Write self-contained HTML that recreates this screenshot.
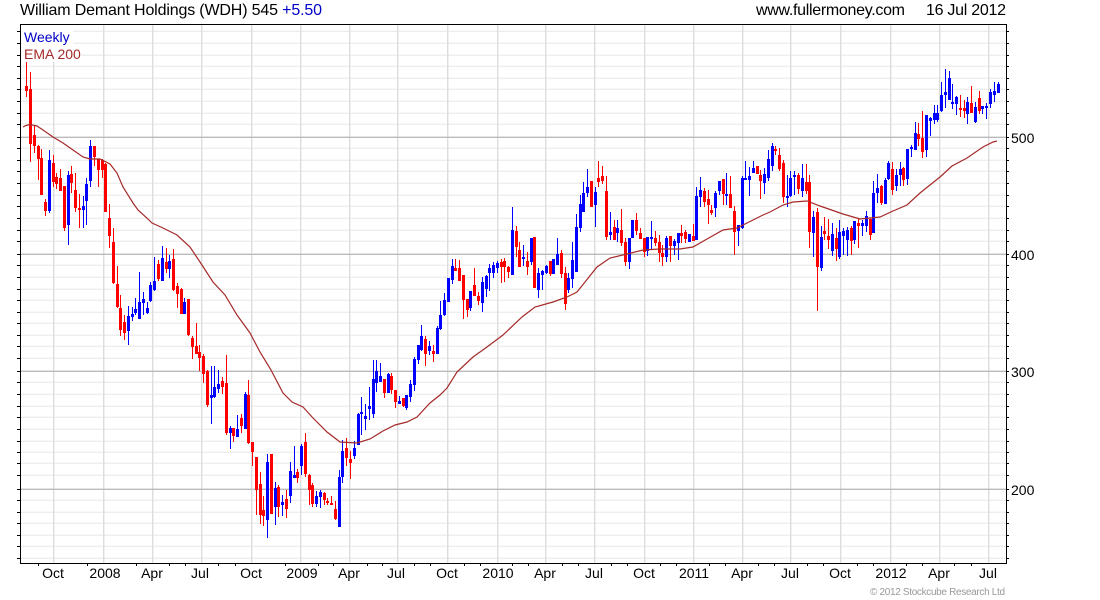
<!DOCTYPE html>
<html><head><meta charset="utf-8"><title>William Demant Holdings</title>
<style>
html,body{margin:0;padding:0;background:#fff;width:1100px;height:600px;overflow:hidden}
svg{display:block}
text{font-family:"Liberation Sans",sans-serif;font-size:14px;fill:#000}
.t{font-size:16px}
.m{text-anchor:middle}
path{fill:none;shape-rendering:crispEdges}
.g{shape-rendering:auto;stroke-width:1.4px}
.r{stroke:#f00;stroke-width:1}.R{stroke:#f00;stroke-width:3}
.b{stroke:#00f;stroke-width:1}.B{stroke:#00f;stroke-width:3}
</style></head><body>
<svg width="1100" height="600" viewBox="0 0 1100 600" xmlns="http://www.w3.org/2000/svg">
<path class="g" stroke="#eee" transform="translate(0,-.2)" d="M20 31.5H1006M20 43.5H1006M20 55.5H1006M20 66.5H1006M20 78.5H1006M20 89.5H1006M20 101.5H1006M20 113.5H1006M20 124.5H1006M20 148.5H1006M20 160.5H1006M20 171.5H1006M20 183.5H1006M20 195.5H1006M20 206.5H1006M20 218.5H1006M20 230.5H1006M20 241.5H1006M20 265.5H1006M20 277.5H1006M20 289.5H1006M20 300.5H1006M20 312.5H1006M20 323.5H1006M20 335.5H1006M20 346.5H1006M20 358.5H1006M20 382.5H1006M20 394.5H1006M20 406.5H1006M20 417.5H1006M20 429.5H1006M20 441.5H1006M20 452.5H1006M20 463.5H1006M20 475.5H1006M20 500.5H1006M20 512.5H1006M20 523.5H1006M20 535.5H1006M20 546.5H1006M20 558.5H1006"/>
<path class="g" stroke="#ddd" transform="translate(.2,0)" d="M53.5 24V563M103.5 24V563M152.5 24V563M201.5 24V563M251.5 24V563M300.5 24V563M349.5 24V563M397.5 24V563M447.5 24V563M497.5 24V563M545.5 24V563M594.5 24V563M644.5 24V563M693.5 24V563M742.5 24V563M790.5 24V563M840.5 24V563M890.5 24V563M939.5 24V563M988.5 24V563"/>
<path class="g" stroke="#bbb" transform="translate(0,-.2)" d="M20 137.5H1006M20 254.5H1006M20 371.5H1006M20 489.5H1006"/>
<rect x="21" y="25" width="52" height="22" fill="#fff"/><rect x="21" y="47" width="60" height="15" fill="#fff"/>
<path class="r" d="M26.5 62V97M30.5 72V162M34.5 125V153M38.5 145V180M41.5 149V195M45.5 199V216"/><path class="R" d="M26.5 86V91M30.5 89V144M34.5 135V146M38.5 146V159M41.5 158V195M45.5 202V211"/>
<path class="b" d="M49.5 150V213"/><path class="B" d="M49.5 160V211"/>
<path class="r" d="M53.5 155V187M56.5 173V189M60.5 169V191M64.5 186V231"/><path class="R" d="M53.5 163V182M56.5 177V184M60.5 178V191M64.5 186V228"/>
<path class="b" d="M68.5 171V245"/><path class="B" d="M68.5 175V225"/>
<path class="r" d="M71.5 166V193M75.5 173V212M79.5 194V228"/><path class="R" d="M71.5 174V183M75.5 190V208M79.5 208V210"/>
<path class="b" d="M83.5 196V228M86.5 178V225M90.5 140V187"/><path class="B" d="M83.5 206V210M86.5 184V201M90.5 146V181"/>
<path class="r" d="M94.5 146V166M98.5 159V187M102.5 159V178M105.5 163V212M109.5 204V248M113.5 228V284M117.5 266V308M120.5 295V336M124.5 315V340"/><path class="R" d="M94.5 146V157M98.5 159V170M102.5 160V170M105.5 164V212M109.5 218V236M113.5 242V283M117.5 284V307M120.5 308V330M124.5 322V333"/>
<path class="b" d="M128.5 306V345M132.5 307V321M135.5 298V315M139.5 272V319M143.5 292V315M147.5 302V314M150.5 282V302M154.5 257V291"/><path class="B" d="M128.5 316V331M132.5 314V317M135.5 309V313M139.5 302V319M143.5 299V303M147.5 308V313M150.5 285V301M154.5 281V290"/>
<path class="r" d="M158.5 260V281"/><path class="R" d="M158.5 264V279"/>
<path class="b" d="M162.5 246V281"/><path class="B" d="M162.5 258V281"/>
<path class="r" d="M166.5 248V273"/><path class="R" d="M166.5 262V269"/>
<path class="b" d="M169.5 255V278"/><path class="B" d="M169.5 261V269"/>
<path class="r" d="M173.5 249V291M177.5 283V308M181.5 288V314"/><path class="R" d="M173.5 259V290M177.5 286V294M181.5 289V314"/>
<path class="b" d="M184.5 298V314"/><path class="B" d="M184.5 302V314"/>
<path class="r" d="M188.5 299V336M192.5 336V359M196.5 323V354M199.5 345V371M203.5 354V383M207.5 370V407"/><path class="R" d="M188.5 299V335M192.5 338V347M196.5 346V354M199.5 352V358M203.5 356V374M207.5 371V405"/>
<path class="b" d="M211.5 366V424M214.5 366V398M218.5 370V393"/><path class="B" d="M211.5 395V398M214.5 387V397M218.5 384V389"/>
<path class="r" d="M222.5 377V394M226.5 355V435"/><path class="R" d="M222.5 381V387M226.5 383V433"/>
<path class="b" d="M230.5 426V449"/><path class="B" d="M230.5 428V433"/>
<path class="r" d="M233.5 428V442"/><path class="R" d="M233.5 428V436"/>
<path class="b" d="M237.5 415V437"/><path class="B" d="M237.5 429V437"/>
<path class="r" d="M241.5 414V433"/><path class="R" d="M241.5 418V426"/>
<path class="b" d="M245.5 392V429"/><path class="B" d="M245.5 394V429"/>
<path class="r" d="M248.5 380V444M252.5 442V466M256.5 457V515M260.5 472V524M263.5 496V526"/><path class="R" d="M248.5 395V443M252.5 442V452M256.5 457V490M260.5 484V515M263.5 510V516"/>
<path class="b" d="M267.5 454V538"/><path class="B" d="M267.5 462V520"/>
<path class="r" d="M271.5 454V514"/><path class="R" d="M271.5 454V514"/>
<path class="b" d="M275.5 482V525"/><path class="B" d="M275.5 488V507"/>
<path class="r" d="M278.5 485V517"/><path class="R" d="M278.5 487V507"/>
<path class="b" d="M282.5 495V516"/><path class="B" d="M282.5 502V505"/>
<path class="r" d="M286.5 490V518"/><path class="R" d="M286.5 499V509"/>
<path class="b" d="M290.5 462V503M294.5 446V478"/><path class="B" d="M290.5 471V496M294.5 475V478"/>
<path class="r" d="M297.5 469V483"/><path class="R" d="M297.5 472V478"/>
<path class="b" d="M301.5 444V475"/><path class="B" d="M301.5 446V466"/>
<path class="r" d="M305.5 433V477M309.5 474V505M312.5 483V507"/><path class="R" d="M305.5 442V474M309.5 475V490M312.5 485V504"/>
<path class="b" d="M316.5 491V507M320.5 490V508"/><path class="B" d="M316.5 496V504M320.5 492V497"/>
<path class="r" d="M324.5 492V505M327.5 498V505M331.5 496V505M335.5 501V520"/><path class="R" d="M324.5 493V500M327.5 501V503M331.5 503V505M335.5 509V519"/>
<path class="b" d="M339.5 470V527M342.5 440V483"/><path class="B" d="M339.5 477V527M342.5 451V477"/>
<path class="r" d="M346.5 438V466M350.5 451V479"/><path class="R" d="M346.5 448V458M350.5 459V463"/>
<path class="b" d="M354.5 441V459M358.5 413V445M361.5 397V435M365.5 404V430M369.5 387V420M373.5 360V418M376.5 360V392M380.5 363V382"/><path class="B" d="M354.5 448V456M358.5 414V445M361.5 412V414M365.5 416V419M369.5 406V409M373.5 379V414M376.5 371V383M380.5 376V382"/>
<path class="r" d="M384.5 379V398"/><path class="R" d="M384.5 379V393"/>
<path class="b" d="M388.5 373V393"/><path class="B" d="M388.5 374V393"/>
<path class="r" d="M391.5 373V394M395.5 390V408"/><path class="R" d="M391.5 376V390M395.5 390V402"/>
<path class="b" d="M399.5 396V404"/><path class="B" d="M399.5 401V404"/>
<path class="r" d="M403.5 398V407"/><path class="R" d="M403.5 398V406"/>
<path class="b" d="M406.5 395V410M410.5 380V402M414.5 357V391M418.5 345V364M421.5 325V351"/><path class="B" d="M406.5 395V408M410.5 384V397M414.5 359V385M418.5 345V360M421.5 336V350"/>
<path class="r" d="M425.5 336V366"/><path class="R" d="M425.5 339V354"/>
<path class="b" d="M429.5 341V355"/><path class="B" d="M429.5 346V351"/>
<path class="r" d="M433.5 345V362"/><path class="R" d="M433.5 351V354"/>
<path class="b" d="M437.5 326V354M440.5 301V330M444.5 293V316M448.5 280V302M452.5 259V284"/><path class="B" d="M437.5 328V354M440.5 315V329M444.5 300V315M448.5 278V302M452.5 266V280"/>
<path class="r" d="M455.5 259V271M459.5 260V281M463.5 275V319M467.5 299V317"/><path class="R" d="M455.5 268V271M459.5 268V281M463.5 275V300M467.5 299V310"/>
<path class="b" d="M470.5 291V311"/><path class="B" d="M470.5 291V308"/>
<path class="r" d="M474.5 268V296M478.5 292V305"/><path class="R" d="M474.5 285V296M478.5 296V301"/>
<path class="b" d="M482.5 277V312M486.5 275V297M489.5 264V291M493.5 262V278M497.5 261V273"/><path class="B" d="M482.5 282V303M486.5 276V289M489.5 268V273M493.5 265V273M497.5 263V268"/>
<path class="r" d="M501.5 259V283M504.5 258V282M508.5 266V278"/><path class="R" d="M501.5 262V267M504.5 261V267M508.5 267V272"/>
<path class="b" d="M512.5 207V275"/><path class="B" d="M512.5 230V275"/>
<path class="r" d="M516.5 226V257M519.5 242V267"/><path class="R" d="M516.5 231V247M519.5 250V267"/>
<path class="b" d="M523.5 245V266"/><path class="B" d="M523.5 257V259"/>
<path class="r" d="M527.5 252V275"/><path class="R" d="M527.5 261V267"/>
<path class="b" d="M531.5 238V265"/><path class="B" d="M531.5 238V262"/>
<path class="r" d="M534.5 237V288"/><path class="R" d="M534.5 237V288"/>
<path class="b" d="M538.5 268V298M542.5 270V290M546.5 265V274"/><path class="B" d="M538.5 273V290M542.5 271V275M546.5 266V273"/>
<path class="r" d="M550.5 261V276"/><path class="R" d="M550.5 261V274"/>
<path class="b" d="M553.5 259V274M557.5 238V265"/><path class="B" d="M553.5 259V274M557.5 254V265"/>
<path class="r" d="M561.5 250V278M565.5 267V310"/><path class="R" d="M561.5 253V274M565.5 273V304"/>
<path class="b" d="M568.5 273V293M572.5 242V288M576.5 214V272M580.5 195V232M583.5 182V212M587.5 169V197"/><path class="B" d="M568.5 278V290M572.5 260V279M576.5 227V272M580.5 204V228M583.5 193V212M587.5 187V193"/>
<path class="r" d="M591.5 181V207"/><path class="R" d="M591.5 181V207"/>
<path class="b" d="M595.5 187V227"/><path class="B" d="M595.5 192V205"/>
<path class="r" d="M598.5 161V187M602.5 166V184M606.5 176V240"/><path class="R" d="M598.5 178V182M602.5 176V181M606.5 191V237"/>
<path class="b" d="M610.5 212V240"/><path class="B" d="M610.5 232V235"/>
<path class="r" d="M614.5 220V240"/><path class="R" d="M614.5 227V240"/>
<path class="b" d="M617.5 220V242"/><path class="B" d="M617.5 228V233"/>
<path class="r" d="M621.5 209V246M625.5 238V266"/><path class="R" d="M621.5 230V243M625.5 242V262"/>
<path class="b" d="M629.5 238V269M632.5 220V238"/><path class="B" d="M629.5 238V262M632.5 220V238"/>
<path class="r" d="M636.5 213V235M640.5 228V239M644.5 238V257"/><path class="R" d="M636.5 220V231M640.5 233V239M644.5 238V252"/>
<path class="b" d="M647.5 237V256M651.5 221V250"/><path class="B" d="M647.5 237V251M651.5 237V239"/>
<path class="r" d="M655.5 231V246M659.5 235V262M662.5 245V266"/><path class="R" d="M655.5 238V243M659.5 242V253M662.5 253V257"/>
<path class="b" d="M666.5 236V262"/><path class="B" d="M666.5 238V257"/>
<path class="r" d="M670.5 236V262"/><path class="R" d="M670.5 236V246"/>
<path class="b" d="M674.5 239V255M678.5 233V260"/><path class="B" d="M674.5 241V246M678.5 233V243"/>
<path class="r" d="M681.5 225V243M685.5 230V243"/><path class="R" d="M681.5 233V236M685.5 232V239"/>
<path class="b" d="M689.5 234V242"/><path class="B" d="M689.5 234V242"/>
<path class="r" d="M693.5 224V241"/><path class="R" d="M693.5 236V241"/>
<path class="b" d="M696.5 187V240M700.5 177V207"/><path class="B" d="M696.5 196V240M700.5 190V197"/>
<path class="r" d="M704.5 188V207M708.5 190V224M711.5 205V215"/><path class="R" d="M704.5 191V202M708.5 199V205M711.5 210V213"/>
<path class="b" d="M715.5 191V217M719.5 181V195"/><path class="B" d="M715.5 193V208M719.5 181V191"/>
<path class="r" d="M723.5 179V205"/><path class="R" d="M723.5 179V194"/>
<path class="b" d="M726.5 173V205"/><path class="B" d="M726.5 194V196"/>
<path class="r" d="M730.5 176V208M734.5 206V255"/><path class="R" d="M730.5 194V208M734.5 211V232"/>
<path class="b" d="M738.5 225V246M742.5 176V229M745.5 161V180M749.5 167V196M753.5 161V173"/><path class="B" d="M738.5 225V231M742.5 178V228M745.5 178V180M749.5 176V180M753.5 168V173"/>
<path class="r" d="M757.5 166V174M760.5 170V199"/><path class="R" d="M757.5 166V174M760.5 175V181"/>
<path class="b" d="M764.5 168V194M768.5 150V181M772.5 143V171"/><path class="B" d="M764.5 174V183M768.5 159V178M772.5 146V166"/>
<path class="r" d="M775.5 146V155M779.5 148V171M783.5 160V203"/><path class="R" d="M775.5 149V151M779.5 155V169M783.5 163V197"/>
<path class="b" d="M787.5 175V207M790.5 171V197M794.5 171V195"/><path class="B" d="M787.5 196V198M790.5 178V196M794.5 175V177"/>
<path class="r" d="M798.5 173V194"/><path class="R" d="M798.5 175V189"/>
<path class="b" d="M802.5 164V197"/><path class="B" d="M802.5 178V191"/>
<path class="r" d="M806.5 164V194M809.5 175V248"/><path class="R" d="M806.5 182V191M809.5 182V232"/>
<path class="b" d="M813.5 211V257"/><path class="B" d="M813.5 217V233"/>
<path class="r" d="M817.5 208V311"/><path class="R" d="M817.5 212V267"/>
<path class="b" d="M821.5 226V271"/><path class="B" d="M821.5 237V268"/>
<path class="r" d="M824.5 217V240M828.5 219V249"/><path class="R" d="M824.5 231V234M828.5 236V240"/>
<path class="b" d="M832.5 223V256"/><path class="B" d="M832.5 234V251"/>
<path class="r" d="M836.5 228V261"/><path class="R" d="M836.5 238V249"/>
<path class="b" d="M839.5 220V259M843.5 228V255M847.5 227V256"/><path class="B" d="M839.5 232V257M843.5 231V236M847.5 230V240"/>
<path class="r" d="M851.5 226V255"/><path class="R" d="M851.5 228V241"/>
<path class="b" d="M854.5 221V244"/><path class="B" d="M854.5 221V240"/>
<path class="r" d="M858.5 218V248"/><path class="R" d="M858.5 223V226"/>
<path class="b" d="M862.5 220V236M866.5 211V232"/><path class="B" d="M862.5 223V226M866.5 216V226"/>
<path class="r" d="M870.5 218V240"/><path class="R" d="M870.5 219V235"/>
<path class="b" d="M873.5 181V233M877.5 174V203"/><path class="B" d="M873.5 193V233M877.5 188V193"/>
<path class="r" d="M881.5 185V205"/><path class="R" d="M881.5 186V203"/>
<path class="b" d="M885.5 178V204M888.5 161V180"/><path class="B" d="M885.5 180V204M888.5 163V179"/>
<path class="r" d="M892.5 162V195"/><path class="R" d="M892.5 169V190"/>
<path class="b" d="M896.5 169V191M900.5 162V186"/><path class="B" d="M896.5 175V186M900.5 169V175"/>
<path class="r" d="M903.5 167V186"/><path class="R" d="M903.5 168V180"/>
<path class="b" d="M907.5 149V185M911.5 145V157M915.5 122V150"/><path class="B" d="M907.5 149V179M911.5 147V149M915.5 133V150"/>
<path class="r" d="M918.5 123V146M922.5 111V158"/><path class="R" d="M918.5 134V139M922.5 138V152"/>
<path class="b" d="M926.5 115V157M930.5 117V136M934.5 105V124M937.5 105V122M941.5 82V112M945.5 69V108M949.5 71V100M952.5 84V109M956.5 96V115"/><path class="B" d="M926.5 115V150M930.5 118V121M934.5 113V120M937.5 113V120M941.5 95V111M945.5 92V95M949.5 78V100M952.5 102V104M956.5 97V104"/>
<path class="r" d="M960.5 95V117M964.5 100V118"/><path class="R" d="M960.5 108V110M964.5 108V111"/>
<path class="b" d="M967.5 97V124"/><path class="B" d="M967.5 102V114"/>
<path class="r" d="M971.5 86V113"/><path class="R" d="M971.5 103V113"/>
<path class="b" d="M975.5 102V123"/><path class="B" d="M975.5 107V122"/>
<path class="r" d="M979.5 91V114"/><path class="R" d="M979.5 98V111"/>
<path class="b" d="M982.5 106V114M986.5 103V119M990.5 89V108M994.5 82V102M998.5 82V93"/><path class="B" d="M982.5 106V109M986.5 106V108M990.5 92V104M994.5 91V95M998.5 84V93"/>
<polyline fill="none" stroke="#a52a2a" stroke-width="1.2" points="23,127 26,125.5 30,124.5 37,126 43,130 53,137 63,143 73,150 83,157 90,159 100,159 110,164 117,173 123,187 133,203 138,210 148,219 152,223 163,228 177,235 190,247 200,262 213,282 225,295 237,315 250,333 260,352 271,370 283,393 292,402 303,407 313,418 327,432 340,442 357,443 370,439 383,431 395,425 407,422 417,417 430,403 440,395 447,388 457,372 473,357 487,347 503,335 522,317 535,307 553,302 567,297 577,292 585,282 597,267 610,258 627,254 643,250 660,249 680,249 693,247 707,239 723,230 737,228 747,223 763,215 770,212 783,205 793,202 807,201 820,206 843,214 860,219 880,217 893,211 907,205 920,193 940,177 952,166 967,158 983,147 993,142 997,141"/>
<rect x="20.5" y="24.5" width="986" height="539" fill="none" stroke="#000" stroke-width="1" shape-rendering="crispEdges"/>
<path stroke="#000" d="M17 31.5H20M17 43.5H20M17 55.5H20M17 66.5H20M17 78.5H20M17 89.5H20M17 101.5H20M17 113.5H20M17 124.5H20M17 137.5H20M17 148.5H20M17 160.5H20M17 171.5H20M17 183.5H20M17 195.5H20M17 206.5H20M17 218.5H20M17 230.5H20M17 241.5H20M17 254.5H20M17 265.5H20M17 277.5H20M17 289.5H20M17 300.5H20M17 312.5H20M17 323.5H20M17 335.5H20M17 346.5H20M17 358.5H20M17 371.5H20M17 382.5H20M17 394.5H20M17 406.5H20M17 417.5H20M17 429.5H20M17 441.5H20M17 452.5H20M17 463.5H20M17 475.5H20M17 489.5H20M17 500.5H20M17 512.5H20M17 523.5H20M17 535.5H20M17 546.5H20M17 558.5H20"/>
<path stroke="#000" d="M1007 31.5H1009M1007 43.5H1009M1007 55.5H1009M1007 66.5H1009M1007 78.5H1009M1007 89.5H1009M1007 101.5H1009M1007 113.5H1009M1007 124.5H1009M1007 137.5H1009M1007 148.5H1009M1007 160.5H1009M1007 171.5H1009M1007 183.5H1009M1007 195.5H1009M1007 206.5H1009M1007 218.5H1009M1007 230.5H1009M1007 241.5H1009M1007 254.5H1009M1007 265.5H1009M1007 277.5H1009M1007 289.5H1009M1007 300.5H1009M1007 312.5H1009M1007 323.5H1009M1007 335.5H1009M1007 346.5H1009M1007 358.5H1009M1007 371.5H1009M1007 382.5H1009M1007 394.5H1009M1007 406.5H1009M1007 417.5H1009M1007 429.5H1009M1007 441.5H1009M1007 452.5H1009M1007 463.5H1009M1007 475.5H1009M1007 489.5H1009M1007 500.5H1009M1007 512.5H1009M1007 523.5H1009M1007 535.5H1009M1007 546.5H1009M1007 558.5H1009"/>
<path stroke="#000" d="M38.5 564V566M87.5 564V566M136.5 564V566M169.5 564V566M185.5 564V566M218.5 564V566M235.5 564V566M285.5 564V566M318.5 564V566M333.5 564V566M367.5 564V566M382.5 564V566M414.5 564V566M430.5 564V566M464.5 564V566M480.5 564V566M512.5 564V566M528.5 564V566M562.5 564V566M578.5 564V566M611.5 564V566M627.5 564V566M660.5 564V566M676.5 564V566M709.5 564V566M725.5 564V566M758.5 564V566M774.5 564V566M807.5 564V566M823.5 564V566M857.5 564V566M873.5 564V566M906.5 564V566M922.5 564V566M954.5 564V566M971.5 564V566"/>
<text class="t" x="20" y="15" textLength="302">William Demant Holdings (WDH) 545 <tspan fill="#0000c8">+5.50</tspan></text>
<text class="t" x="756" y="15" textLength="149">www.fullermoney.com</text>
<text class="t" x="926" y="15" textLength="80">16 Jul 2012</text>
<text x="24" y="42" style="fill:#0000c8">Weekly</text>
<text x="24" y="59" style="fill:#a52a2a">EMA 200</text>
<text x="1011" y="143">500</text><text x="1011" y="260">400</text><text x="1011" y="377">300</text><text x="1011" y="495">200</text>
<text class="m" x="53" y="578">Oct</text><text class="m" x="105" y="578">2008</text><text class="m" x="152" y="578">Apr</text><text class="m" x="200" y="578">Jul</text><text class="m" x="251" y="578">Oct</text><text class="m" x="302" y="578">2009</text><text class="m" x="349" y="578">Apr</text><text class="m" x="396" y="578">Jul</text><text class="m" x="447" y="578">Oct</text><text class="m" x="498" y="578">2010</text><text class="m" x="545" y="578">Apr</text><text class="m" x="594" y="578">Jul</text><text class="m" x="644" y="578">Oct</text><text class="m" x="694" y="578">2011</text><text class="m" x="742" y="578">Apr</text><text class="m" x="790" y="578">Jul</text><text class="m" x="840" y="578">Oct</text><text class="m" x="891" y="578">2012</text><text class="m" x="939" y="578">Apr</text><text class="m" x="988" y="578">Jul</text>
<text x="870" y="595" textLength="135" style="font-size:10px;fill:#999">© 2012 Stockcube Research Ltd</text>
</svg>
</body></html>
